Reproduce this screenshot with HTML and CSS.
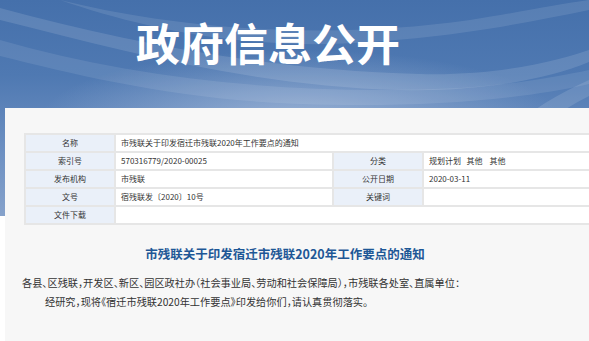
FILE: index.html
```html
<!DOCTYPE html>
<html lang="zh-CN">
<head>
    <meta charset="UTF-8">
    <title>政府信息公开</title>
    <link rel="stylesheet" href="styles.css">
</head>
<body>

    <div class="banner">
        <svg class="waves" width="589" height="216" viewBox="0 0 589 216" preserveAspectRatio="none">
            <path d="M0 8 C120 40 260 70 420 74 C500 76 560 60 589 50 L589 62 C540 82 470 92 400 90 C250 86 120 50 0 20 Z" fill="#ffffff" fill-opacity="0.12"/>
            <path d="M60 0 C180 30 330 40 470 20 C520 12 560 4 589 0 L589 10 C520 24 440 40 330 44 C220 46 130 24 60 0 Z" fill="#ffffff" fill-opacity="0.10"/>
            <path d="M0 40 C140 80 300 96 460 88 C520 84 560 76 589 70 L589 84 C520 100 420 108 300 104 C180 100 80 76 0 56 Z" fill="#ffffff" fill-opacity="0.09"/>
            <path d="M430 216 C470 160 520 110 589 80 L589 96 C540 120 500 160 470 216 Z" fill="#ffffff" fill-opacity="0.12"/>
        </svg>
        <h1 class="banner-title">政府信息公开</h1>
    </div>

    <div class="panel">
        <table class="info-table">
            <colgroup>
                <col class="col-label">
                <col class="col-value">
                <col class="col-label">
                <col>
            </colgroup>
            <tr>
                <td class="label">名称</td>
                <td class="value" colspan="3">市残联关于印发宿迁市残联2020年工作要点的通知</td>
            </tr>
            <tr>
                <td class="label">索引号</td>
                <td class="value">570316779/2020-00025</td>
                <td class="label">分类</td>
                <td class="value">规划计划&nbsp;&nbsp;&nbsp;其他&nbsp;&nbsp;&nbsp;&nbsp;其他</td>
            </tr>
            <tr>
                <td class="label">发布机构</td>
                <td class="value">市残联</td>
                <td class="label">公开日期</td>
                <td class="value">2020-03-11</td>
            </tr>
            <tr>
                <td class="label">文号</td>
                <td class="value">宿残联发〔2020〕10号</td>
                <td class="label">关键词</td>
                <td class="value"></td>
            </tr>
            <tr>
                <td class="label">文件下载</td>
                <td class="value" colspan="3"></td>
            </tr>
        </table>

        <h2 class="doc-title">市残联关于印发宿迁市残联2020年工作要点的通知</h2>

        <div class="doc-body">
            <p class="first">各县、区残联，开发区、新区、园区政社办（社会事业局、劳动和社会保障局），市残联各处室、直属单位：</p>
            <p class="indent">经研究，现将《宿迁市残联2020年工作要点》印发给你们，请认真贯彻落实。</p>
        </div>
    </div>

</body>
</html>
```

FILE: styles.css
```css
* {
    margin: 0;
    padding: 0;
    box-sizing: border-box;
}

body {
    font-family: "Noto Sans CJK SC", "Noto Sans", sans-serif;
    background: #ffffff;
    color: #333333;
    width: 589px;
    height: 341px;
    overflow: hidden;
}

.banner {
    position: relative;
    height: 216px;
    background:
        radial-gradient(ellipse 260px 70px at 300px 120px, rgba(170, 190, 220, 0.75), rgba(170, 190, 220, 0) 100%),
        linear-gradient(180deg, #4570ab 0%, #4f79b2 35%, #6d90c2 70%, #86a2cb 100%);
    overflow: hidden;
}

.waves {
    position: absolute;
    left: 0;
    top: 0;
}

.banner-title {
    position: relative;
    padding: 14px 0 0 136px;
    font-size: 44px;
    line-height: 56px;
    font-weight: bold;
    color: #ffffff;
}

.panel {
    position: relative;
    margin: -108px 0 0 5px;
    width: 640px;
    height: 240px;
    background: #f7f7f7;
    padding: 25px 0 0 19px;
}

.info-table {
    width: 620px;
    border-collapse: collapse;
    background: #ffffff;
    font-size: 8px;
    table-layout: fixed;
}

.col-label {
    width: 90px;
}

.col-value {
    width: 218px;
}

.info-table td {
    height: 18px;
    border: 2px solid #e6e6e6;
    line-height: 14px;
    white-space: nowrap;
    overflow: hidden;
}

.info-table td.label {
    background: #eaf0f9;
    text-align: center;
    color: #333333;
}

.info-table td.value {
    padding-left: 5px;
    color: #333333;
}

.doc-title {
    width: 560px;
    margin: 20px 0 0 -19px;
    text-align: center;
    font-size: 12.5px;
    line-height: 18px;
    font-weight: bold;
    color: #1e5796;
}

.doc-body {
    margin: 10px 0 0 -2px;
    font-size: 10.2px;
    line-height: 19px;
    color: #333333;
    font-feature-settings: "halt";
}

.doc-body .indent {
    padding-left: 23px;
}
```
